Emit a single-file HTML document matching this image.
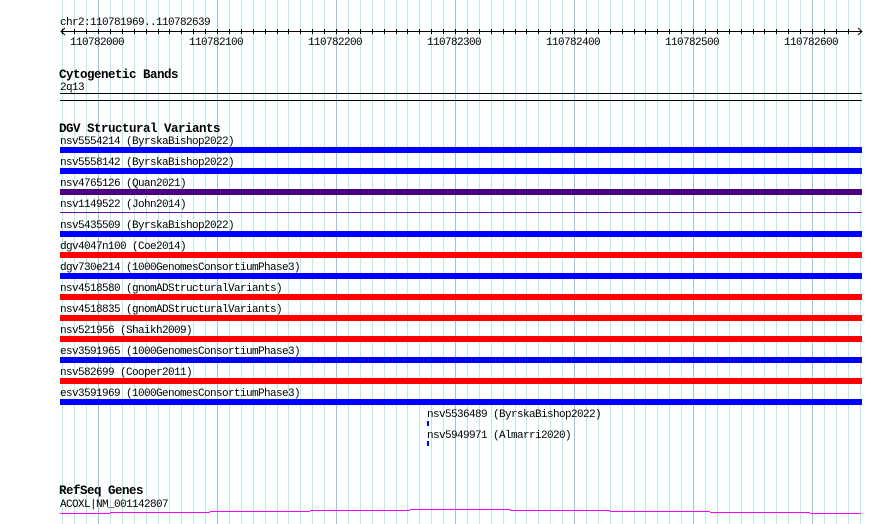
<!DOCTYPE html>
<html><head><meta charset="utf-8"><style>
html,body{margin:0;padding:0;background:#fff;}
svg{display:block}
text{font-family:"Liberation Mono","DejaVu Sans Mono",monospace;font-size:11px;letter-spacing:-0.6px;fill:#000}
.b{font-weight:bold;font-size:12.5px;letter-spacing:-0.5px}
</style></head><body>
<svg width="890" height="524" xmlns="http://www.w3.org/2000/svg">
<path stroke="#b0eef0" stroke-width="1" shape-rendering="crispEdges" d="M62.5 0V524M74.5 0V524M86.5 0V524M110.5 0V524M122.5 0V524M134.5 0V524M146.5 0V524M158.5 0V524M169.5 0V524M181.5 0V524M193.5 0V524M205.5 0V524M229.5 0V524M241.5 0V524M253.5 0V524M265.5 0V524M277.5 0V524M288.5 0V524M300.5 0V524M312.5 0V524M324.5 0V524M348.5 0V524M360.5 0V524M372.5 0V524M384.5 0V524M396.5 0V524M407.5 0V524M419.5 0V524M431.5 0V524M443.5 0V524M467.5 0V524M479.5 0V524M491.5 0V524M503.5 0V524M515.5 0V524M526.5 0V524M538.5 0V524M550.5 0V524M562.5 0V524M586.5 0V524M598.5 0V524M610.5 0V524M622.5 0V524M634.5 0V524M645.5 0V524M657.5 0V524M669.5 0V524M681.5 0V524M705.5 0V524M717.5 0V524M729.5 0V524M741.5 0V524M753.5 0V524M764.5 0V524M776.5 0V524M788.5 0V524M800.5 0V524M824.5 0V524M836.5 0V524M848.5 0V524M860.5 0V524"/>
<path stroke="#8cc8e8" stroke-width="1" shape-rendering="crispEdges" d="M98.5 0V524M217.5 0V524M336.5 0V524M455.5 0V524M574.5 0V524M693.5 0V524M812.5 0V524"/>
<text x="60" y="25">chr2:110781969..110782639</text>
<g stroke="#000" shape-rendering="crispEdges">
<line x1="61" y1="31.5" x2="862" y2="31.5"/>
<path d="M62.5 29V34M74.5 29V34M86.5 29V34M98.5 29V34M110.5 29V34M122.5 29V34M134.5 29V34M146.5 29V34M158.5 29V34M169.5 29V34M181.5 29V34M193.5 29V34M205.5 29V34M217.5 29V34M229.5 29V34M241.5 29V34M253.5 29V34M265.5 29V34M277.5 29V34M288.5 29V34M300.5 29V34M312.5 29V34M324.5 29V34M336.5 29V34M348.5 29V34M360.5 29V34M372.5 29V34M384.5 29V34M396.5 29V34M407.5 29V34M419.5 29V34M431.5 29V34M443.5 29V34M455.5 29V34M467.5 29V34M479.5 29V34M491.5 29V34M503.5 29V34M515.5 29V34M526.5 29V34M538.5 29V34M550.5 29V34M562.5 29V34M574.5 29V34M586.5 29V34M598.5 29V34M610.5 29V34M622.5 29V34M634.5 29V34M645.5 29V34M657.5 29V34M669.5 29V34M681.5 29V34M693.5 29V34M705.5 29V34M717.5 29V34M729.5 29V34M741.5 29V34M753.5 29V34M764.5 29V34M776.5 29V34M788.5 29V34M800.5 29V34M812.5 29V34M824.5 29V34M836.5 29V34M848.5 29V34"/>
<line x1="60" y1="93.5" x2="862" y2="93.5"/>
<line x1="60" y1="100.5" x2="862" y2="100.5"/>
</g>
<polyline points="65,28 61,31.5 65,35" fill="none" stroke="#000"/>
<polyline points="858,28 862,31.5 858,35" fill="none" stroke="#000"/>
<text x="70" y="45">110782000</text>
<text x="189" y="45">110782100</text>
<text x="308" y="45">110782200</text>
<text x="427" y="45">110782300</text>
<text x="546" y="45">110782400</text>
<text x="665" y="45">110782500</text>
<text x="784" y="45">110782600</text>
<text class="b" x="59" y="78">Cytogenetic Bands</text>
<text x="60" y="90">2q13</text>
<text class="b" x="59" y="132">DGV Structural Variants</text>
<g shape-rendering="crispEdges">
<text x="60" y="144">nsv5554214 (ByrskaBishop2022)</text><rect x="60" y="147" width="802" height="6" fill="#0000ff"/>
<text x="60" y="165">nsv5558142 (ByrskaBishop2022)</text><rect x="60" y="168" width="802" height="6" fill="#0000ff"/>
<text x="60" y="186">nsv4765126 (Quan2021)</text><rect x="60" y="189" width="802" height="6" fill="#4b0082"/>
<text x="60" y="207">nsv1149522 (John2014)</text><rect x="60" y="212" width="802" height="1" fill="#6a0dad"/>
<text x="60" y="228">nsv5435509 (ByrskaBishop2022)</text><rect x="60" y="231" width="802" height="6" fill="#0000ff"/>
<text x="60" y="249">dgv4047n100 (Coe2014)</text><rect x="60" y="252" width="802" height="6" fill="#ff0000"/>
<text x="60" y="270">dgv730e214 (1000GenomesConsortiumPhase3)</text><rect x="60" y="273" width="802" height="6" fill="#0000ff"/>
<text x="60" y="291">nsv4518580 (gnomADStructuralVariants)</text><rect x="60" y="294" width="802" height="6" fill="#ff0000"/>
<text x="60" y="312">nsv4518835 (gnomADStructuralVariants)</text><rect x="60" y="315" width="802" height="6" fill="#ff0000"/>
<text x="60" y="333">nsv521956 (Shaikh2009)</text><rect x="60" y="336" width="802" height="6" fill="#ff0000"/>
<text x="60" y="354">esv3591965 (1000GenomesConsortiumPhase3)</text><rect x="60" y="357" width="802" height="6" fill="#0000ff"/>
<text x="60" y="375">nsv582699 (Cooper2011)</text><rect x="60" y="378" width="802" height="6" fill="#ff0000"/>
<text x="60" y="396">esv3591969 (1000GenomesConsortiumPhase3)</text><rect x="60" y="399" width="802" height="6" fill="#0000ff"/>
<text x="427" y="417">nsv5536489 (ByrskaBishop2022)</text><rect x="427" y="421" width="2" height="5" fill="#0000ff"/>
<text x="427" y="438">nsv5949971 (Almarri2020)</text><rect x="427" y="441" width="2" height="5" fill="#0000ff"/>
</g>
<text class="b" x="59" y="494">RefSeq Genes</text>
<text x="60" y="507">ACOXL|NM_001142807</text>
<g fill="#ff00ff" shape-rendering="crispEdges">
<rect x="60" y="513" width="50" height="1"/>
<rect x="110" y="512" width="100" height="1"/>
<rect x="210" y="511" width="100" height="1"/>
<rect x="310" y="510" width="100" height="1"/>
<rect x="410" y="509" width="100" height="1"/>
<rect x="510" y="510" width="100" height="1"/>
<rect x="610" y="511" width="100" height="1"/>
<rect x="710" y="512" width="100" height="1"/>
<rect x="810" y="513" width="51" height="1"/>
</g>
</svg>
</body></html>
